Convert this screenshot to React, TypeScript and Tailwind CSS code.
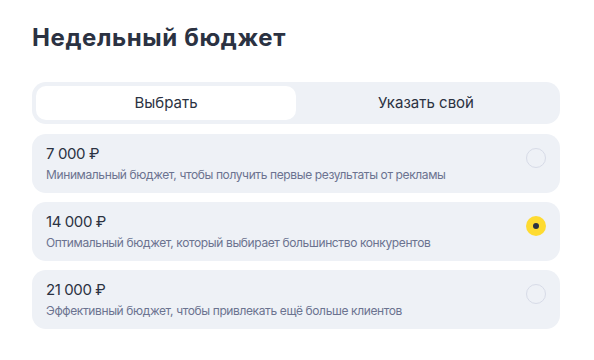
import { useState } from 'react'

const options = [
  { value: 7000, price: '7 000 ₽', text: 'Минимальный бюджет, чтобы получить первые результаты от рекламы' },
  { value: 14000, price: '14 000 ₽', text: 'Оптимальный бюджет, который выбирает большинство конкурентов' },
  { value: 21000, price: '21 000 ₽', text: 'Эффективный бюджет, чтобы привлекать ещё больше клиентов' }
]

export default function App() {
  const [mode, setMode] = useState<'pick' | 'own'>('pick')
  const [selected, setSelected] = useState(14000)

  return (
    <div className="min-h-[360px] w-[594px] bg-white pl-8 pr-[34px] pt-[23px] font-['Inter',sans-serif] text-[#2b3242]">
      <h1 className="text-[24px] font-bold leading-[30px] tracking-[0.6px]">Недельный бюджет</h1>

      <div className="mt-[29px] flex h-[42px] rounded-[14px] bg-[#eef1f6] p-1">
        <button
          onClick={() => setMode('pick')}
          className={`flex-1 rounded-[10px] text-[15px] ${mode === 'pick' ? 'bg-white' : ''}`}
        >
          Выбрать
        </button>
        <button
          onClick={() => setMode('own')}
          className={`flex-1 rounded-[10px] text-[15px] ${mode === 'own' ? 'bg-white' : ''}`}
        >
          Указать свой
        </button>
      </div>

      <div className="mt-[10px] flex flex-col gap-[9px]">
        {options.map((o) => (
          <div
            key={o.value}
            onClick={() => setSelected(o.value)}
            className="flex h-[59px] cursor-pointer items-center rounded-[14px] bg-[#eef1f6] pl-[14px] pr-[14px]"
          >
            <div className="flex-1">
              <div className="text-[15px] leading-[20px] tracking-[-0.4px]">{o.price}</div>
              <div className="mt-[3px] text-[12px] leading-[16px] tracking-[-0.38px] text-[#6b7390]">{o.text}</div>
            </div>
            {selected === o.value ? (
              <div className="mb-[12px] flex h-5 w-5 items-center justify-center rounded-full bg-[#fedb31]">
                <div className="h-[6px] w-[6px] rounded-full bg-[#2b3242]" />
              </div>
            ) : (
              <div className="mb-[12px] h-5 w-5 rounded-full border border-[#d7dbe7]" />
            )}
          </div>
        ))}
      </div>
    </div>
  )
}
